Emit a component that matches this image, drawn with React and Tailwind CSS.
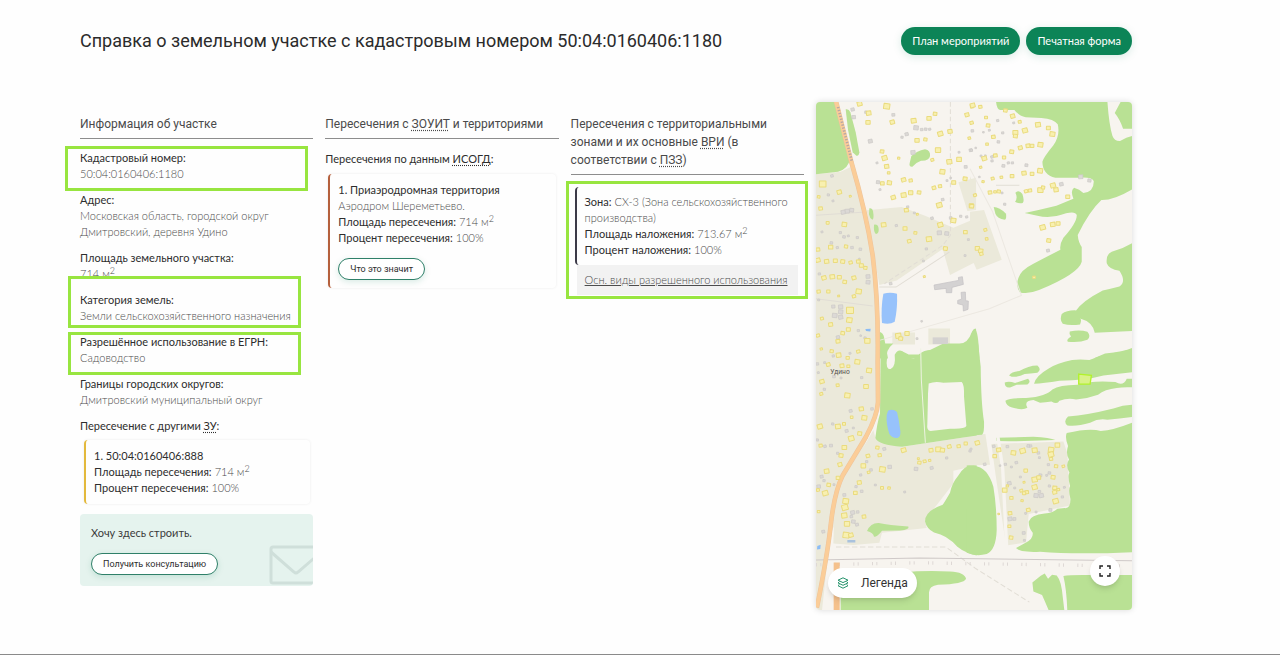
import { useState } from 'react';
import { clsx } from 'clsx';

// map tiles: each one has its own origin, buildings are [x, y, size]
const TILES = [
  {
    id: 'nw',
    x: -18,
    y: -21,
    houses: [
      [149, 27, 16], [176, 55, 16], [174, 83, 15], [230, 35, 20], [247, 82, 15], [311, 78, 17], [357, 71, 15], [375, 57, 13], [471, 60, 14], [486, 35, 12],
      [321, 137, 15], [346, 134, 12], [391, 117, 17], [420, 110, 15], [384, 166, 18], [216, 170, 13], [224, 190, 17], [230, 215, 15], [236, 234, 10], [266, 190, 9],
      [367, 195, 11], [418, 201, 17], [447, 194, 16], [397, 231, 17], [281, 255, 15], [302, 257, 12], [217, 266, 13], [238, 264, 15], [372, 279, 13], [390, 274, 12],
      [431, 263, 14], [465, 252, 14], [250, 308, 15], [281, 301, 17], [302, 294, 15], [327, 293, 13], [388, 331, 18], [289, 346, 14], [484, 333, 15], [430, 377, 17],
      [391, 390, 17], [221, 390, 16], [285, 401, 14], [316, 414, 11], [298, 439, 13], [357, 433, 18], [466, 412, 13], [406, 461, 14], [478, 130, 10], [322, 358, 8],
      [38, 268, 22], [26, 306, 10], [88, 292, 15], [32, 341, 13], [53, 384, 11], [103, 389, 16], [121, 304, 8], [24, 464, 13], [62, 457, 15], [108, 455, 12],
      [24, 496, 15], [50, 500, 15], [76, 498, 14], [98, 500, 14], [122, 503, 12], [145, 500, 13], [154, 512, 14], [166, 519, 12], [42, 549, 15], [67, 546, 16],
      [88, 547, 14], [104, 561, 13], [132, 549, 14], [26, 590, 12], [55, 590, 12], [146, 590, 18], [132, 604, 12], [86, 603, 8], [120, 647, 23], [118, 676, 18],
      [36, 671, 11], [62, 689, 14], [115, 704, 14], [98, 715, 13], [24, 722, 12], [84, 739, 14], [172, 738, 18], [65, 769, 12], [34, 762, 9], [265, 723, 18],
      [291, 716, 15], [272, 731, 14], [343, 545, 8],
    ],
    sheds: [
      [128, 44, 10], [131, 67, 11], [168, 52, 8], [181, 139, 12], [250, 60, 9], [318, 99, 14], [290, 118, 10], [335, 104, 8], [347, 103, 8], [359, 103, 7],
      [309, 173, 13], [276, 127, 7], [482, 166, 9], [467, 216, 9], [204, 262, 10], [210, 284, 6], [411, 257, 6], [422, 249, 5], [398, 314, 8], [293, 336, 7],
      [313, 354, 6], [366, 370, 8], [422, 369, 8], [452, 364, 7], [470, 366, 7], [388, 414, 13], [410, 416, 12], [259, 392, 7], [349, 462, 7], [340, 498, 6],
      [100, 352, 13], [112, 349, 13], [125, 346, 12], [66, 243, 8], [91, 413, 7], [102, 426, 8], [115, 423, 6], [142, 428, 7], [64, 444, 8], [82, 458, 7],
      [126, 458, 8], [151, 463, 8], [36, 411, 6], [174, 545, 12], [174, 562, 12], [242, 566, 8], [92, 636, 13], [92, 651, 13], [92, 667, 13], [70, 635, 10],
      [74, 662, 14], [84, 727, 10], [145, 707, 7], [165, 729, 7], [335, 679, 5], [321, 731, 6], [55, 300, 7], [69, 318, 6], [475, 434, 6], [465, 482, 6],
      [201, 204, 6], [447, 172, 6], [152, 722, 5], [148, 492, 5], [28, 537, 7], [26, 615, 6],
    ],
  },
  {
    id: 'ne',
    x: 462,
    y: -21,
    houses: [
      [8, 32, 16], [31, 36, 12], [48, 68, 11], [54, 92, 13], [5, 84, 12], [70, 126, 13], [51, 148, 10], [106, 47, 13], [128, 64, 15], [149, 81, 11],
      [136, 114, 17], [136, 124, 14], [165, 107, 17], [204, 90, 17], [235, 100, 14], [247, 118, 17], [43, 191, 16], [76, 182, 13], [102, 188, 12], [125, 171, 14],
      [151, 159, 14], [174, 153, 14], [186, 153, 13], [211, 150, 17], [32, 217, 9], [162, 235, 15], [186, 237, 13], [210, 228, 17], [68, 251, 11], [94, 247, 10],
      [126, 244, 13], [39, 260, 9], [15, 301, 11], [60, 293, 13], [75, 291, 10], [86, 290, 12], [168, 289, 12], [180, 287, 12], [211, 286, 18], [219, 278, 12],
      [249, 272, 17], [258, 285, 15], [293, 306, 14], [5, 334, 14], [218, 398, 18], [248, 389, 16], [264, 386, 14], [236, 437, 14], [46, 405, 11], [50, 432, 10],
      [22, 461, 15], [32, 468, 15], [34, 477, 12], [192, 547, 10],
    ],
    sheds: [
      [83, 77, 7], [7, 108, 8], [40, 112, 5], [58, 106, 6], [98, 114, 7], [85, 141, 8], [131, 84, 6], [4, 166, 7], [17, 159, 5], [66, 186, 8], [66, 198, 7],
      [100, 213, 9], [115, 204, 7], [127, 204, 7], [169, 211, 9], [28, 246, 5], [96, 294, 6], [104, 328, 7], [274, 268, 11], [332, 246, 13], [358, 257, 10],
      [234, 467, 9], [33, 183, 6], [46, 182, 5],
    ],
  },
  {
    id: 'sw',
    x: -18,
    y: 744,
    houses: [
      [145, 5, 12], [86, 16, 16], [113, 24, 12], [142, 36, 17], [55, 44, 13], [96, 48, 14], [115, 49, 11], [177, 62, 17], [36, 95, 15], [83, 106, 11], [168, 110, 16],
      [112, 137, 18], [34, 132, 11], [154, 177, 15], [125, 202, 10], [163, 204, 17], [30, 230, 17], [84, 230, 17], [102, 222, 11], [149, 251, 14], [124, 266, 18],
      [32, 287, 12], [103, 293, 16], [93, 317, 14], [90, 344, 14], [50, 364, 16], [84, 384, 13], [56, 405, 13], [46, 430, 18], [24, 420, 11], [26, 485, 10],
      [202, 293, 12], [174, 318, 13], [209, 316, 12], [160, 348, 16], [217, 359, 19], [176, 367, 10], [148, 398, 14], [136, 429, 13], [107, 454, 19], [105, 473, 20],
      [103, 497, 18], [111, 522, 18], [108, 556, 20], [123, 556, 15], [162, 500, 13], [216, 414, 11], [237, 414, 10], [281, 301, 16], [363, 301, 14], [385, 299, 18],
      [397, 301, 15], [418, 290, 13], [446, 289, 12], [467, 281, 12], [328, 338, 12], [344, 334, 11], [359, 331, 9], [325, 326, 8],
    ],
    sheds: [
      [70, 18, 7], [22, 42, 8], [44, 38, 6], [120, 10, 6], [72, 80, 8], [93, 84, 6], [25, 68, 6], [155, 83, 7], [43, 118, 7], [122, 183, 9], [186, 177, 8],
      [68, 222, 7], [110, 243, 9], [130, 234, 6], [22, 270, 7], [45, 289, 8], [63, 287, 9], [83, 310, 7], [223, 297, 9], [239, 351, 11], [318, 357, 11], [365, 354, 9],
      [410, 324, 7], [480, 303, 7], [152, 375, 7], [155, 424, 8], [138, 410, 7], [35, 380, 9], [26, 410, 11], [42, 392, 7], [128, 488, 12], [143, 486, 8],
      [130, 515, 11], [141, 524, 9], [124, 500, 8], [196, 405, 6], [284, 426, 6], [183, 360, 8], [170, 335, 7], [40, 545, 9], [103, 435, 9], [72, 404, 6],
    ],
  },
  {
    id: 'se',
    x: 462,
    y: 744,
    houses: [
      [22, 279, 15], [86, 300, 15], [74, 319, 13], [130, 309, 16], [158, 303, 18], [194, 301, 17], [262, 286, 16], [243, 300, 18], [243, 314, 18], [243, 327, 12],
      [167, 362, 13], [258, 349, 12], [280, 349, 10], [194, 389, 18], [206, 383, 14], [249, 382, 14], [194, 412, 17], [162, 397, 8], [104, 421, 16], [112, 408, 9],
      [154, 422, 11], [170, 427, 13], [162, 430, 12], [254, 414, 14], [254, 427, 14], [265, 419, 10], [124, 444, 12], [156, 452, 9], [257, 454, 18], [120, 490, 13],
      [118, 529, 11], [123, 563, 13], [175, 480, 13], [86, 492, 7],
    ],
    sheds: [
      [71, 289, 8], [112, 290, 8], [175, 288, 9], [182, 288, 7], [205, 309, 8], [208, 323, 6], [90, 347, 5], [106, 343, 7], [124, 351, 6], [139, 338, 8], [235, 344, 7],
      [238, 369, 8], [230, 376, 6], [151, 381, 6], [211, 376, 9], [118, 400, 11], [134, 414, 6], [238, 408, 7], [283, 412, 6], [208, 425, 8], [198, 437, 13],
      [214, 437, 13], [277, 441, 7], [241, 480, 9], [120, 507, 12], [133, 507, 9], [198, 486, 6], [167, 490, 6], [161, 549, 9], [163, 571, 6], [44, 343, 8], [3, 297, 6],
    ],
  },
];

const FOREST = {
  nw: [
    'M0 0H68L80 45L92 92L106 140L120 190Q116 222 84 230L18 238H0Z',
    'M107 43Q116 40 121 52L137 112L148 172Q147 184 139 182L128 172L114 104Z',
    'M304 183Q320 168 345 163Q362 166 360 183Q357 198 333 197Q316 203 307 215Q296 216 299 204Z',
    'M178 340Q187 338 189 348Q193 372 187 374Q179 370 177 358Z',
    'M192 389Q205 387 206 402Q207 416 198 417Q190 411 192 389Z',
    'M210 711Q219 714 222 726L234 790H210Z',
    'M255 790Q254 768 275 768L296 778H326Q345 762 372 765Q420 762 448 747Q475 743 484 714Q488 702 498 700V790Z',
  ],
  ne: [
    'M78 20H412Q417 90 427 122Q433 139 450 138Q470 126 486 123V283Q430 316 394 315Q358 348 323 420Q325 442 335 456V500Q326 536 207 585Q175 598 150 592Q136 574 145 549Q152 525 190 506Q240 480 271 464Q268 448 280 428Q321 382 320 360Q316 348 288 355Q242 372 202 362L164 354Q210 344 259 332L310 311Q300 286 312 278Q328 282 340 294Q372 290 371 258Q366 246 330 248H256Q218 240 217 200Q220 188 250 151Q271 120 263 88Q252 72 214 69L167 67Q148 64 133 45H90Q80 42 78 20Z',
    'M452 20H490V101H459Q449 72 434 54Z',
    'M136 293Q147 283 157 297Q164 318 158 324Q145 327 135 320Q144 308 136 293Z',
    'M71 336Q88 336 108 356Q110 372 104 374Q82 371 76 356Z',
    'M490 442Q458 462 425 470Q407 477 410 505Q416 523 448 527Q470 560 448 574Q425 580 398 586Q338 617 318 646Q290 645 275 657Q268 676 278 686Q300 693 330 688Q336 672 330 670Q368 680 374 713L490 708Z',
    'M299 709Q330 703 352 710Q364 724 352 734Q328 744 293 740Q288 733 303 724Q296 716 299 709Z',
    'M0 740Q6 702 14 701Q25 705 28 790H0Z',
    'M490 757Q466 770 405 775L370 790H490Z',
  ],
  sw: [
    'M212 -20H250Q226 0 231 25Q226 58 242 57Q258 50 254 14Q265 -6 278 5Q296 26 312 25Q330 10 360 0L400 -20H500V256L276 290Q205 285 196 264Q201 220 210 190Z',
    'M500 346Q465 340 445 376Q425 400 420 428Q404 456 398 464Q345 482 345 514Q350 536 372 547Q412 555 442 590Q464 608 500 616Z',
    'M171 543Q182 518 206 519Q236 526 295 529Q300 538 270 541L216 542Q203 560 192 560Q190 548 171 543Z',
    'M92 790V700L200 680Q290 658 420 664Q464 666 468 686Q462 702 384 704Q356 708 357 728V790Z',
  ],
  se: [
    'M-10 -20H24L32 50Q33 160 42 215Q43 250 36 254L-10 257Z',
    'M-10 346Q0 344 12 348Q52 350 70 410Q80 470 80 540Q78 600 50 612Q18 620 -10 608Z',
    'M490 -4Q460 5 420 10Q385 17 358 30Q330 27 306 30Q260 40 236 55Q196 78 192 101Q220 100 268 92Q350 90 400 76L490 66Z',
    'M117 76Q126 64 148 63Q175 46 202 46Q216 58 202 68Q180 70 164 72Q145 82 125 80Z',
    'M104 97Q118 92 135 99L174 86Q184 96 172 103L140 104L120 112Q104 114 104 97Z',
    'M106 152Q120 143 168 144Q230 138 247 118Q268 105 322 104Q370 90 436 96Q460 110 470 86H490V112Q460 110 440 114Q404 118 384 134Q352 146 318 148Q294 142 268 152Q262 164 244 154Q226 156 210 158L190 150Q160 152 172 173Q158 182 126 172Q108 168 106 152Z',
    'M490 164Q460 164 430 175Q350 195 294 199Q278 214 292 226Q320 230 360 218Q386 204 412 209Q450 206 490 200Z',
    'M490 216Q430 240 392 243Q360 232 290 249Q284 262 294 288Q286 312 297 328Q285 345 298 367Q292 380 300 408Q294 420 301 446Q302 476 284 474L262 476Q250 488 224 490Q182 494 176 514Q175 532 188 548Q190 566 168 577L138 594Q150 608 210 605Q320 614 490 606Z',
    'M78 263L190 260Q240 262 256 270L186 272Q140 274 80 273Z',
    'M280 678Q300 674 360 675H490V790H292Q290 720 280 678Z',
    'M187 697L212 677L224 670L234 686L246 674L260 676Q274 692 278 740L284 790H240Q228 762 216 735L190 724Z',
  ],
};

const LAND = {
  nw: [
    'M18 238L92 230L122 216L168 350L190 470L205 790H0V238Z',
    'M170 346L275 336L345 362L430 398L498 370V500L420 540L398 462L260 556L208 570L190 470Z',
    'M445 262L498 248V345L472 348Z',
    'M355 700H420V748H355ZM247 712H315V748H247Z',
  ],
  ne: ['M0 350L42 345L95 494L20 524L0 480ZM0 244L18 290L0 300Z'],
  sw: [
    'M0 -20H206L200 190L60 560L35 790H0Z',
    'M196 262L276 290L500 256V346L430 362V400L345 510L350 534L216 548L208 578L130 585L70 580L75 440L190 240Z',
  ],
  se: ['M-10 256L46 252L60 344L-10 346Z', 'M64 282L280 274L292 310L300 466L176 492L168 577L108 586L76 370Z'],
};

function Tile({ tile }) {
  return (
    <g transform={`translate(${tile.x} ${tile.y})`}>
      {tile.sheds.map(([x, y, s], i) => (
        <rect key={i} x={x - s / 2} y={y - s / 2} width={s} height={s * 0.9} fill="#dcd9d6" stroke="#cbc8c6" strokeWidth="2" transform={`rotate(${(i % 3) * 9 - 12} ${x} ${y})`} />
      ))}
      {tile.houses.map(([x, y, s], i) => (
        <rect key={i} x={x - s / 2 + 1} y={y - s / 2 + 1} width={s - 2} height={s * 0.9 - 2} rx="1" fill="#f8f0b0" stroke="#eadb7e" strokeWidth="3" transform={`rotate(${(i % 4) * 8 - 16} ${x} ${y})`} />
      ))}
    </g>
  );
}

function PlotMap() {
  return (
    <svg viewBox="0 0 948 1524" preserveAspectRatio="xMidYMid slice" className="block h-full w-full" role="img" aria-label="Карта участка">
      <rect width="948" height="1524" fill="#f7f4ef" />
      {TILES.map((t) => (
        <g key={t.id} transform={`translate(${t.x} ${t.y})`}>
          {LAND[t.id].map((d) => <path key={d} d={d} fill="#ebe9da" />)}
        </g>
      ))}
      {TILES.map((t) => (
        <g key={t.id} transform={`translate(${t.x} ${t.y})`}>
          {FOREST[t.id].map((d) => <path key={d} d={d} fill="#b9e194" />)}
        </g>
      ))}

      <g transform="translate(-18 744)">
        {/* clearing and ponds */}
        <path d="M356 100Q376 92 400 98L455 96Q463 102 462 140L469 228Q464 238 420 236L362 243Q349 242 352 220L354 130Z" fill="#f7f4ef" />
        <path d="M332 -5L334 90L346 278" fill="none" stroke="#eef3e2" strokeWidth="3" />
        <path d="M234 182Q248 174 261 186Q266 206 270 236Q275 260 262 264Q246 265 238 252Q228 222 230 195Z" fill="#97c2fb" />
        <path d="M22 588L32 584L31 597L21 598Z" fill="#8bbcf5" />
        <path d="M112 570H136V577H112Z" fill="#a9c2dd" />
      </g>
      <g transform="translate(-18 -21)">
        <path d="M220 596Q240 590 261 596Q263 640 254 680Q240 689 216 684Q212 640 220 596Z" fill="#97c2fb" />
        <path d="M166 702L182 701L181 709L168 708Z" fill="#8bbcf5" />
        <path d="M372 570L446 556L445 547L457 545L460 568L426 577L425 593H409L408 580L374 584ZM453 592L466 591L467 617L475 618L474 643L460 648L459 630L443 626V616L455 612Z" fill="#d4d2d2" stroke="#c2c0c2" strokeWidth="2" />
        <path d="M368 727H414V747H368Z" fill="#d4d2d0" />
      </g>

      {/* minor roads and paths */}
      <g fill="none" stroke="#e1ddd5" strokeWidth="3">
        <path d="M403 0V400L380 430L205 545" strokeDasharray="14 8" />
        <path d="M190 555H240L400 450" />
        <path d="M462 200L530 330L616 580L520 620L190 715" stroke="#ece8e1" />
        <path d="M540 250H610M0 590L170 612M0 340L150 330" />
        <path d="M60 1335H390L480 1400L640 1500" strokeDasharray="16 8" />
        <path d="M545 1000L560 1100L572 1340" stroke="#f7f4ef" strokeWidth="10" />
      </g>
      <path d="M0 1374L310 1368L948 1376" fill="none" stroke="#cfc9c8" strokeWidth="3" />
      <path d="M0 1388L310 1382L948 1392" fill="none" stroke="#ded8d5" strokeWidth="10" strokeDasharray="3 10 3 40" />

      {/* main road */}
      <g fill="none" strokeLinecap="square">
        <path d="M58 -10L106 180Q150 330 170 460Q188 600 185 780L186 900Q184 940 150 1004L80 1120Q55 1170 44 1270Q34 1360 4 1510" stroke="#edc49c" strokeWidth="14" />
        <path d="M58 -10L106 180Q150 330 170 460Q188 600 185 780L186 900Q184 940 150 1004L80 1120Q55 1170 44 1270Q34 1360 4 1510" stroke="#fbcd98" strokeWidth="11" />
        <path d="M62 1390V1540" stroke="#f5c18c" strokeWidth="18" />
        <path d="M66 15L108 180" stroke="#b9a7a4" strokeWidth="8" strokeDasharray="4 5" strokeLinecap="butt" />
      </g>

      {TILES.map((t) => <Tile key={t.id} tile={t} />)}

      <text x="43" y="816" fontSize="20" fill="#55524f" fontFamily="Roboto, sans-serif">Удино</text>

      {/* selected plot */}
      <path d="M788 816L826 820L822 846H788Z" fill="#d9f28a" stroke="#b2f22a" strokeWidth="4" />
    </svg>
  );
}

function Highlight({ className }) {
  return <span aria-hidden="true" className={clsx('pointer-events-none absolute border-3 border-[#98e540]', className)} />;
}

function Heading({ children }) {
  return <h2 className="border-b border-[#8d8d8d] pb-[5px] font-['Roboto',sans-serif] text-[12px] leading-[18px] text-[#4a4a4a]">{children}</h2>;
}

function Abbr({ title, children }) {
  return <abbr title={title} className="underline decoration-dotted underline-offset-2">{children}</abbr>;
}

function Field({ label, children, mark }) {
  return (
    <div className="relative">
      <dt className="text-[#2d2d2d]">{label}</dt>
      <dd className="font-light text-[#4c4c4c]">{children}</dd>
      {mark && <Highlight className={mark} />}
    </div>
  );
}

function Row({ label, children }) {
  return (
    <p className="font-light text-[#4c4c4c]">
      <span className="font-normal text-[#2d2d2d]">{label}</span> {children}
    </p>
  );
}

function Area({ value }) {
  return <>{value} м<sup className="text-[9px]">2</sup></>;
}

function OutlineButton({ children }) {
  return (
    <button type="button" className="block h-[22px] rounded-full border border-[#2f8069] bg-white px-[11px] font-['Roboto',sans-serif] text-[9px] leading-[20px] text-[#2d2d2d] shadow-[0_2px_6px_rgba(10,130,90,0.15)]">
      {children}
    </button>
  );
}

export default function App() {
  const [legendOpen, setLegendOpen] = useState(false);

  return (
    <div className="min-h-screen border-b border-[#8a8a8a] bg-[#fefefe] pt-[27px] pr-[148px] pl-20 font-['Lato',sans-serif] text-[11px] leading-[16px]">
      <header className="flex items-center justify-between gap-4">
        <h1 className="font-['Roboto',sans-serif] text-[18px] leading-[28px] text-[#2b2b2b]">
          Справка о земельном участке с кадастровым номером 50:04:0160406:1180
        </h1>
        <div className="flex shrink-0 gap-[6px]">
          {['План мероприятий', 'Печатная форма'].map((name) => (
            <button key={name} type="button" className="h-7 rounded-full bg-[#0c8457] px-[11px] text-[11px] text-white shadow-[0_2px_8px_rgba(10,130,90,0.15)]">
              {name}
            </button>
          ))}
        </div>
      </header>

      <main className="mt-[47px] grid grid-cols-[234fr_234fr_234fr_317fr] items-start gap-x-3">
        <section className="min-w-0 pt-[13px]">
          <Heading>Информация об участке</Heading>
          <dl className="mt-[11px] flex flex-col gap-[10px]">
            <Field label="Кадастровый номер:" mark="-top-1 -left-[15px] right-[5px] h-[45px]">50:04:0160406:1180</Field>
            <Field label="Адрес:">Московская область, городской округ Дмитровский, деревня Удино</Field>
            <Field label="Площадь земельного участка:"><Area value="714" /></Field>
            <Field label="Категория земель:" mark="-top-4 -left-3 right-3 h-[52px]">Земли сельскохозяйственного назначения</Field>
            <Field label="Разрешённое использование в ЕГРН:" mark="-top-[2px] -left-3 right-3 h-[43px]">Садоводство</Field>
            <Field label="Границы городских округов:">Дмитровский муниципальный округ</Field>
          </dl>
          <h3 className="mt-[10px] text-[#2d2d2d]">Пересечение с другими <Abbr title="Земельные участки">ЗУ</Abbr>:</h3>
          <div className="mt-[6px] mr-[3px] ml-1 rounded-sm border-l-2 border-[#e3b93c] p-2 shadow-[0_0_3px_rgba(0,0,0,0.08)]">
            <p className="text-[#2d2d2d]">1. 50:04:0160406:888</p>
            <Row label="Площадь пересечения:"><Area value="714" /></Row>
            <Row label="Процент пересечения:">100%</Row>
          </div>
          <div className="relative mt-[10px] overflow-hidden rounded-sm bg-[#e5f3ee] px-[11px] pt-[11px] pb-[11px]">
            <p className="text-[#3a3a3a]">Хочу здесь строить.</p>
            <svg viewBox="0 0 48 42" className="absolute right-0 bottom-0 h-[42px] w-12" fill="none" stroke="#cfdfda" strokeWidth="3" aria-hidden="true">
              <rect x="6" y="3" width="52" height="36" rx="2" />
              <path d="M6 8L29 28Q31 30 33 28L54 10" />
            </svg>
            <div className="relative mt-3 flex">
              <OutlineButton>Получить консультацию</OutlineButton>
            </div>
          </div>
        </section>

        <section className="min-w-0 pt-[13px]">
          <Heading>Пересечения с <Abbr title="Зоны с особыми условиями использования территорий">ЗОУИТ</Abbr> и территориями</Heading>
          <h3 className="mt-3 text-[#2d2d2d]">Пересечения по данным <Abbr title="Информационная система обеспечения градостроительной деятельности">ИСОГД</Abbr>:</h3>
          <div className="mt-[7px] mr-[3px] ml-[3px] rounded-sm border-l-2 border-[#b5603d] p-2 shadow-[0_0_3px_rgba(0,0,0,0.08)]">
            <p className="text-[#2d2d2d]">1. Приаэродромная территория</p>
            <p className="font-light text-[#4c4c4c]">Аэродром Шереметьево.</p>
            <Row label="Площадь пересечения:"><Area value="714" /></Row>
            <Row label="Процент пересечения:">100%</Row>
            <div className="mt-3 flex">
              <OutlineButton>Что это значит</OutlineButton>
            </div>
          </div>
        </section>

        <section className="min-w-0 pt-[13px]">
          <Heading>
            Пересечения с территориальными зонами и их основные <Abbr title="Вид разрешённого использования">ВРИ</Abbr> (в соответствии с <Abbr title="Правила землепользования и застройки">ПЗЗ</Abbr>)
          </Heading>
          <div className="relative mt-3 mr-[6px] ml-1">
            <div className="rounded-sm border-l-2 border-[#3c3a48] py-[7px] pl-2">
              <Row label="Зона:">СХ-3 (Зона сельскохозяйственного производства)</Row>
              <Row label="Площадь наложения:"><Area value="713.67" /></Row>
              <Row label="Процент наложения:">100%</Row>
            </div>
            <div className="ml-[2px] bg-[#f2f2f2] px-2 py-[7px]">
              <a href="#vri" className="font-light text-[#4c4c4c] underline">Осн. виды разрешенного использования</a>
            </div>
            <Highlight className="-top-[6px] -right-[10px] -bottom-1 -left-[9px]" />
          </div>
        </section>

        <section className="relative aspect-[316/508] overflow-hidden rounded-sm shadow-[0_0_6px_rgba(0,0,0,0.15)]">
          <PlotMap />
          <button
            type="button"
            aria-expanded={legendOpen}
            onClick={() => setLegendOpen(!legendOpen)}
            className="absolute bottom-3 left-3 flex h-[30px] items-center gap-3 rounded-full bg-white px-[9px] font-['Roboto',sans-serif] text-[12px] text-[#333] shadow-md"
          >
            <svg viewBox="0 0 12 12" className="size-3" fill="none" stroke="#26936c" strokeWidth="1" strokeLinejoin="round" aria-hidden="true">
              <path d="M6 .8L11 3.200L6 5.600L1 3.200Z" />
              <path d="M2.500 4.600L1 5.900L6 8.300L11 5.900L9.500 4.600" />
              <path d="M2.500 7.300L1 8.700L6 11.200L11 8.700L9.500 7.300" />
            </svg>
            Легенда
          </button>
          <button type="button" aria-label="На весь экран" className="absolute right-3 bottom-6 grid size-[30px] place-items-center rounded-full bg-white shadow-md">
            <svg viewBox="0 0 12 12" className="size-3" fill="none" stroke="#222" strokeWidth="1.400" aria-hidden="true">
              <path d="M1 4V1H4M8 1H11V4M11 8V11H8M4 11H1V8" />
            </svg>
          </button>
        </section>
      </main>
    </div>
  );
}
